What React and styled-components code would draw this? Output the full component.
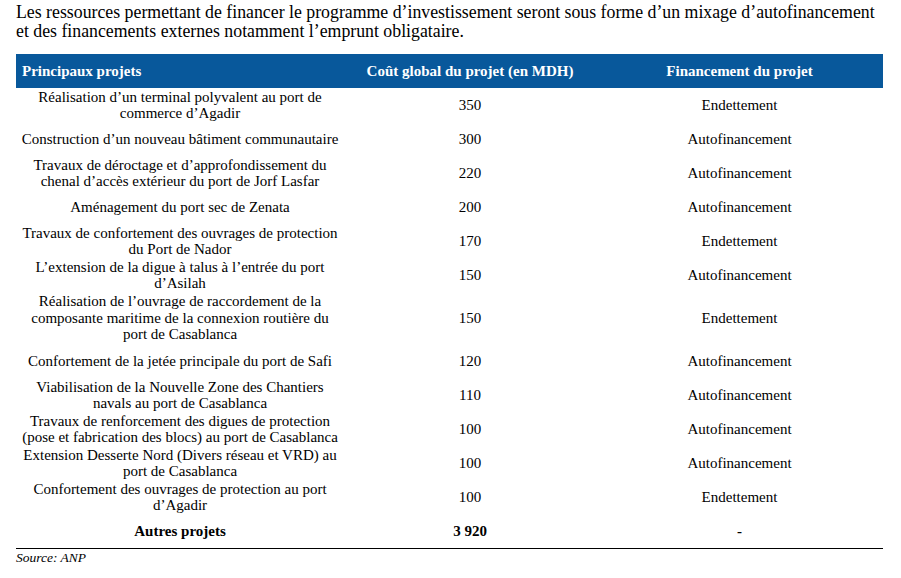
import React from "react";
import styled, { createGlobalStyle } from "styled-components";

const Global = createGlobalStyle`
  html, body { margin: 0; padding: 0; background: #fff; }
  body { font-family: "Liberation Serif", "Times New Roman", serif; color: #000; }
`;

const Page = styled.div`
  padding: 3px 18px 0 16px;
  width: 901px;
  box-sizing: border-box;
`;

const Intro = styled.p`
  margin: 0;
  font-size: 17.8px;
  line-height: 19px;
  width: 880px;
  white-space: nowrap;
`;

const Table = styled.div`
  margin-top: 13px;
  width: 867px;
  border-bottom: 1.5px solid #000;
`;

const HeadRow = styled.div`
  display: grid;
  grid-template-columns: 328px 252px 287px;
  height: 34px;
  align-items: center;
  background: #08589b;
  color: #fff;
  font-weight: bold;
  font-size: 15px;
`;

const HeadCell = styled.div`
  text-align: ${(p) => (p.$left ? "left" : "center")};
  padding-left: ${(p) => (p.$left ? "6px" : "0")};
`;

const Row = styled.div`
  display: grid;
  grid-template-columns: 328px 252px 287px;
  height: ${(p) => (p.$tall ? "52px" : "34px")};
  align-items: center;
  font-size: 15px;
  line-height: 16.5px;
  font-weight: ${(p) => (p.$bold ? "bold" : "normal")};
`;

const Cell = styled.div`
  text-align: center;
  white-space: nowrap;
`;

const Source = styled.div`
  font-style: italic;
  font-size: 13.5px;
  margin-top: 1px;
`;

const rows = [
  [["Réalisation d’un terminal polyvalent au port de", "commerce d’Agadir"], "350", "Endettement"],
  [["Construction d’un nouveau bâtiment communautaire"], "300", "Autofinancement"],
  [["Travaux de déroctage et d’approfondissement du", "chenal d’accès extérieur du port de Jorf Lasfar"], "220", "Autofinancement"],
  [["Aménagement du port sec de Zenata"], "200", "Autofinancement"],
  [["Travaux de confortement des ouvrages de protection", "du Port de Nador"], "170", "Endettement"],
  [["L’extension de la digue à talus à l’entrée du port", "d’Asilah"], "150", "Autofinancement"],
  [["Réalisation de l’ouvrage de raccordement de la", "composante maritime de la connexion routière du", "port de Casablanca"], "150", "Endettement"],
  [["Confortement de la jetée principale du port de Safi"], "120", "Autofinancement"],
  [["Viabilisation de la Nouvelle Zone des Chantiers", "navals au port de Casablanca"], "110", "Autofinancement"],
  [["Travaux de renforcement des digues de protection", "(pose et fabrication des blocs) au port de Casablanca"], "100", "Autofinancement"],
  [["Extension Desserte Nord (Divers réseau et VRD) au", "port de Casablanca"], "100", "Autofinancement"],
  [["Confortement des ouvrages de protection au port", "d’Agadir"], "100", "Endettement"],
];

export default function App() {
  return (
    <Page>
      <Global />
      <Intro>
        Les ressources permettant de financer le programme d’investissement seront sous forme d’un mixage d’autofinancement
        <br />
        et des financements externes notamment l’emprunt obligataire.
      </Intro>
      <Table>
        <HeadRow>
          <HeadCell $left>Principaux projets</HeadCell>
          <HeadCell>Coût global du projet (en MDH)</HeadCell>
          <HeadCell>Financement du projet</HeadCell>
        </HeadRow>
        {rows.map(([lines, cost, fin], i) => (
          <Row key={i} $tall={lines.length > 2}>
            <Cell>
              {lines.map((l, j) => (
                <div key={j}>{l}</div>
              ))}
            </Cell>
            <Cell>{cost}</Cell>
            <Cell>{fin}</Cell>
          </Row>
        ))}
        <Row $bold>
          <Cell>Autres projets</Cell>
          <Cell>3 920</Cell>
          <Cell>-</Cell>
        </Row>
      </Table>
      <Source>Source: ANP</Source>
    </Page>
  );
}
